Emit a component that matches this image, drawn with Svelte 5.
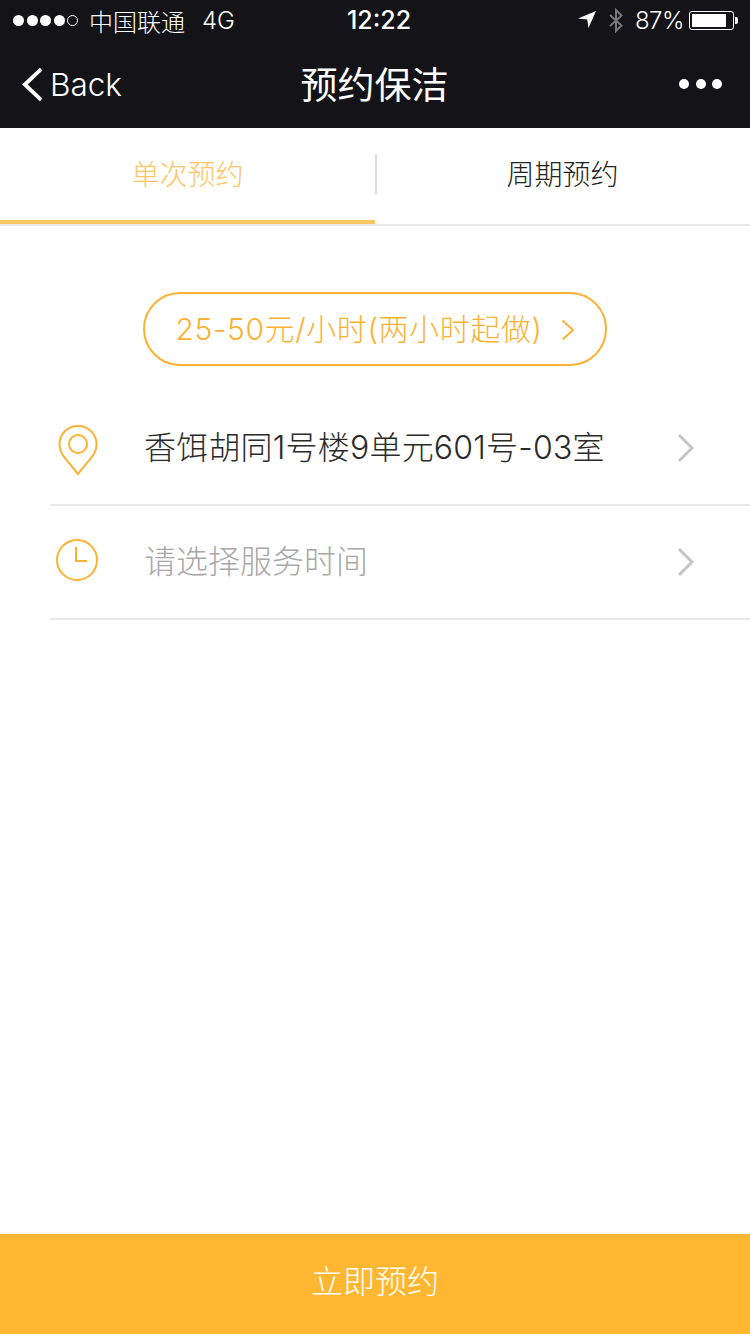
<script lang="ts">
  const rows = [
    { text: '香饵胡同1号楼9单元601号-03室', kind: 'place', empty: false },
    { text: '请选择服务时间', kind: 'time', empty: true },
  ];
</script>

<div class="page">
  <header>
    <div class="status">
      <div class="carrier">
        <span class="signal">
          {#each [0, 1, 2, 3] as i (i)}<i class="dot"></i>{/each}
          <i class="dot hollow"></i>
        </span>
        <span class="carrier-name">中国联通</span>
        <span class="net">4G</span>
      </div>
      <span class="clock">12:22</span>
      <div class="sys">
        <svg class="loc" viewBox="0 0 18 18"><path d="M0 7.5 L18 0 L10.5 17 L9.2 8.6 Z" fill="#fff"/></svg>
        <svg class="bt" viewBox="0 0 16 24" fill="none" stroke="#77777a" stroke-width="2"><path d="M2 6.5 L13.5 17 L8 22.5 V1.5 L13.5 7 L2 17.5"/></svg>
        <span class="pct">87%</span>
        <span class="battery"><span class="level"></span></span>
        <span class="nub"></span>
      </div>
    </div>
    <div class="nav">
      <div class="back">
        <svg viewBox="0 0 24 36" fill="none" stroke="#fff" stroke-width="4"><path d="M21 2 L4 18 L21 34"/></svg>
        <span>Back</span>
      </div>
      <h1>预约保洁</h1>
      <div class="more"><i></i><i></i><i></i></div>
    </div>
  </header>

  <div class="tabs">
    <div class="tab active">单次预约</div>
    <div class="tab">周期预约</div>
  </div>

  <main>
    <div class="pill-wrap">
      <div class="pill">
        <span>25-50元/小时(两小时起做)</span>
        <svg viewBox="0 0 14 22" fill="none" stroke="#fbb234" stroke-width="2"><path d="M1.5 1.5 L12 11 L1.5 20.5"/></svg>
      </div>
    </div>

    <ul>
      {#each rows as row (row.kind)}
        <li>
          <span class="ico">
            {#if row.kind === 'place'}
              <svg class="pin" viewBox="0 0 40 52" fill="none" stroke="#fbb234" stroke-width="2"><path d="M20 50 L6.5 33.5 C3 29 1.5 25.5 1.5 20.5 C1.5 10 9.5 2 20 2 C30.5 2 38.5 10 38.5 20.5 C38.5 25.5 37 29 33.5 33.5 Z"/><circle cx="20" cy="20" r="9"/></svg>
            {:else}
              <svg class="clk" viewBox="0 0 42 42" fill="none" stroke="#fbb234" stroke-width="2"><circle cx="21" cy="21" r="20"/><path d="M20 8 V22 H31"/></svg>
            {/if}
          </span>
          <span class="label" class:empty={row.empty}>{row.text}</span>
          <svg class="chev" viewBox="0 0 18 30" fill="none" stroke="#c6c6c6" stroke-width="3"><path d="M2 2 L15 15 L2 28"/></svg>
        </li>
      {/each}
    </ul>
  </main>

  <button type="button" class="cta">立即预约</button>
</div>

<style>
  :global(body) {
    margin: 0;
    background: #fff;
  }
  .page {
    width: 750px;
    height: 1334px;
    display: flex;
    flex-direction: column;
    font-family: Inter, "Noto Sans CJK SC", sans-serif;
  }
  header {
    height: 128px;
    flex: none;
    background: #131318;
    color: #fff;
  }
  .status {
    height: 40px;
    position: relative;
    display: flex;
    align-items: center;
    justify-content: space-between;
    padding: 0 12px 0 13px;
    font-size: 24px;
    font-weight: 300;
  }
  .carrier {
    display: flex;
    align-items: center;
  }
  .signal {
    display: flex;
    gap: 2.5px;
    margin-right: 11px;
  }
  .dot {
    width: 11px;
    height: 11px;
    border-radius: 50%;
    background: #fff;
  }
  .dot.hollow {
    background: none;
    border: 1px solid #fff;
    box-sizing: border-box;
  }
  .carrier-name {
    font-size: 24px;
    margin-right: 17px;
  }
  .clock {
    position: absolute;
    left: 8px;
    right: 0;
    text-align: center;
    font-weight: 500;
    font-size: 25px;
  }
  .sys {
    display: flex;
    align-items: center;
  }
  .loc {
    width: 18px;
    height: 18px;
    margin-right: 12px;
  }
  .bt {
    width: 16px;
    height: 25px;
    margin-right: 11px;
  }
  .pct {
    margin-right: 5px;
    letter-spacing: -0.5px;
  }
  .battery {
    width: 45px;
    height: 19px;
    box-sizing: border-box;
    border: 1px solid #fff;
    border-radius: 3px;
    padding: 2px;
    display: flex;
  }
  .level {
    width: 87%;
    background: #fff;
  }
  .nub {
    width: 3px;
    height: 7px;
    background: #fff;
    margin-left: 1px;
    border-radius: 0 2px 2px 0;
  }
  .nav {
    height: 88px;
    position: relative;
    display: flex;
    align-items: center;
    justify-content: space-between;
    padding: 0 28px 0 21px;
  }
  .back {
    display: flex;
    align-items: center;
    gap: 6px;
    font-size: 31.5px;
    font-weight: 300;
  }
  .back svg {
    width: 23px;
    height: 35px;
  }
  h1 {
    position: absolute;
    left: 0;
    right: 0;
    margin: 0;
    padding: 0 1px 2px 0;
    text-align: center;
    font-size: 37px;
    font-weight: 400;
  }
  .more {
    display: flex;
    gap: 6.5px;
  }
  .more i {
    width: 10px;
    height: 10px;
    border-radius: 50%;
    background: #fff;
  }
  .tabs {
    height: 98px;
    flex: none;
    display: flex;
    border-bottom: 2px solid #e8e8e8;
    box-sizing: border-box;
    position: relative;
  }
  .tabs::after {
    content: "";
    position: absolute;
    left: 375px;
    top: 26px;
    width: 2px;
    height: 40px;
    background: #dcdcdc;
  }
  .tab {
    flex: 1;
    display: flex;
    align-items: center;
    justify-content: center;
    padding-bottom: 2px;
    font-size: 28px;
    font-weight: 300;
    color: #222;
    border-bottom: 4px solid transparent;
  }
  .tab.active {
    color: #fcc566;
    border-bottom-color: #fcc566;
  }
  main {
    flex: 1;
  }
  .pill-wrap {
    display: flex;
    justify-content: center;
    padding-top: 66px;
  }
  .pill {
    width: 464px;
    height: 74px;
    box-sizing: border-box;
    border: 2px solid #fbb234;
    border-radius: 37px;
    display: flex;
    align-items: center;
    justify-content: center;
    gap: 18px;
    color: #fbb234;
    font-size: 30px;
    font-weight: 300;
  }
  .pill span {
    padding-bottom: 4px;
    letter-spacing: 0.6px;
  }
  .pill svg {
    width: 14px;
    height: 22px;
    margin-top: 2px;
  }
  ul {
    list-style: none;
    margin: 26px 0 0 50px;
    padding: 0;
  }
  li {
    height: 114px;
    box-sizing: border-box;
    border-bottom: 2px solid #e8e8e8;
    display: flex;
    align-items: center;
  }
  .ico {
    width: 94px;
    flex: none;
    display: flex;
  }
  .pin {
    width: 40px;
    height: 52px;
    margin-left: 8px;
    margin-top: 4px;
  }
  .clk {
    width: 42px;
    height: 42px;
    margin-left: 6px;
    margin-bottom: 4px;
  }
  .label {
    flex: 1;
    font-size: 32px;
    font-weight: 300;
    color: #2b2b2b;
    padding-bottom: 7px;
    letter-spacing: 0.2px;
  }
  .label.empty {
    color: #a8a8a8;
    letter-spacing: 0;
    padding-bottom: 6px;
  }
  .chev {
    width: 18px;
    height: 30px;
    margin-right: 55px;
  }
  .cta {
    height: 100px;
    flex: none;
    border: none;
    background: #ffb731;
    color: #fff;
    font: inherit;
    font-size: 32px;
    font-weight: 300;
    padding: 0 0 10px;
  }
</style>
